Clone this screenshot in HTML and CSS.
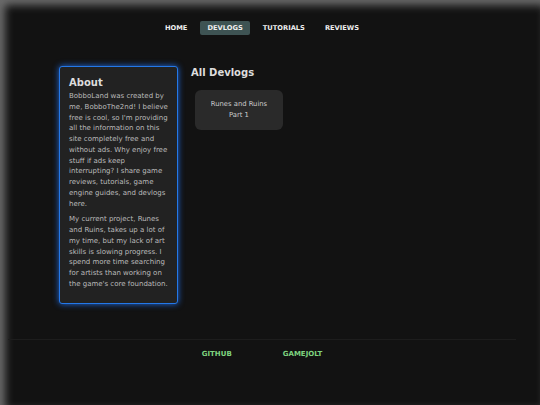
FILE: index.html
```html
<!DOCTYPE html>
<html lang="en">
<head>
    <meta charset="UTF-8">
    <meta name="viewport" content="width=device-width, initial-scale=1.0">
    <title>BobboLand - Devlogs</title>
    <link rel="stylesheet" href="styles.css">
</head>
<body>
    <div class="wrap">
        <nav class="topnav">
            <a href="#" class="nav-link">HOME</a>
            <a href="#" class="nav-link active">DEVLOGS</a>
            <a href="#" class="nav-link">TUTORIALS</a>
            <a href="#" class="nav-link">REVIEWS</a>
        </nav>

        <main class="content">
            <aside class="about">
                <h3 class="about-title">About</h3>
                <p>BobboLand was created by me, BobboThe2nd! I believe free is cool, so I'm providing all the information on this site completely free and without ads. Why enjoy free stuff if ads keep interrupting? I share game reviews, tutorials, game engine guides, and devlogs here.</p>
                <p>My current project, Runes and Ruins, takes up a lot of my time, but my lack of art skills is slowing progress. I spend more time searching for artists than working on the game's core foundation.</p>
            </aside>

            <section class="devlogs">
                <h2 class="section-title">All Devlogs</h2>
                <div class="devlog-list">
                    <a href="#" class="devlog-card">Runes and Ruins<br>Part 1</a>
                </div>
            </section>
        </main>

        <footer class="footer">
            <a href="#" class="footer-link">GITHUB</a>
            <a href="#" class="footer-link">GAMEJOLT</a>
        </footer>
    </div>
</body>
</html>
```

FILE: styles.css
```css
html, body {
    margin: 0;
    padding: 0;
    background: #121212;
}

body {
    min-height: 100vh;
    font-family: "DejaVu Sans", Verdana, sans-serif;
    color: #bbb;
    box-shadow: inset 5px 5px 8px rgba(140, 140, 140, 0.75);
}

.wrap {
    margin-left: 8px;
    width: 508px;
}

.topnav {
    display: flex;
    justify-content: center;
    gap: 6px;
    padding-top: 21px;
}

.nav-link {
    color: #eee;
    text-decoration: none;
    font-size: 6.7px;
    font-weight: bold;
    padding: 3px 7px;
    line-height: 8px;
    border-radius: 2px;
}

.nav-link.active {
    background: #3e5353;
}

.content {
    display: flex;
    align-items: flex-start;
    gap: 13px;
    margin-top: 31px;
    padding-left: 51px;
}

.about {
    width: 100px;
    background: #222;
    border: 1px solid #2478e8;
    border-radius: 3px;
    box-shadow: 0 0 6px #1f6ae0;
    padding: 10px 8px 8px 9px;
}

.about-title {
    margin: 0 0 3px 0;
    font-size: 10px;
    color: #ddd;
}

.about p {
    margin: 0 0 5px 0;
    font-size: 7px;
    line-height: 10.75px;
}

.section-title {
    margin: 1px 0 0 0;
    font-size: 10px;
    color: #ddd;
}

.devlog-list {
    display: flex;
    gap: 10px;
    margin-top: 12px;
    padding-left: 4px;
}

.devlog-card {
    width: 88px;
    height: 40px;
    box-sizing: border-box;
    display: flex;
    align-items: center;
    justify-content: center;
    text-align: center;
    background: #2a2a2a;
    border-radius: 6px;
    color: #ccc;
    text-decoration: none;
    font-size: 6.8px;
    line-height: 10.7px;
}

.footer {
    margin-top: 35px;
    border-top: 1px solid #1d1d1d;
    display: flex;
    justify-content: center;
    gap: 51px;
    padding-top: 10px;
}

.footer-link {
    color: #7fd37f;
    text-decoration: none;
    font-size: 7px;
    font-weight: bold;
}
```
